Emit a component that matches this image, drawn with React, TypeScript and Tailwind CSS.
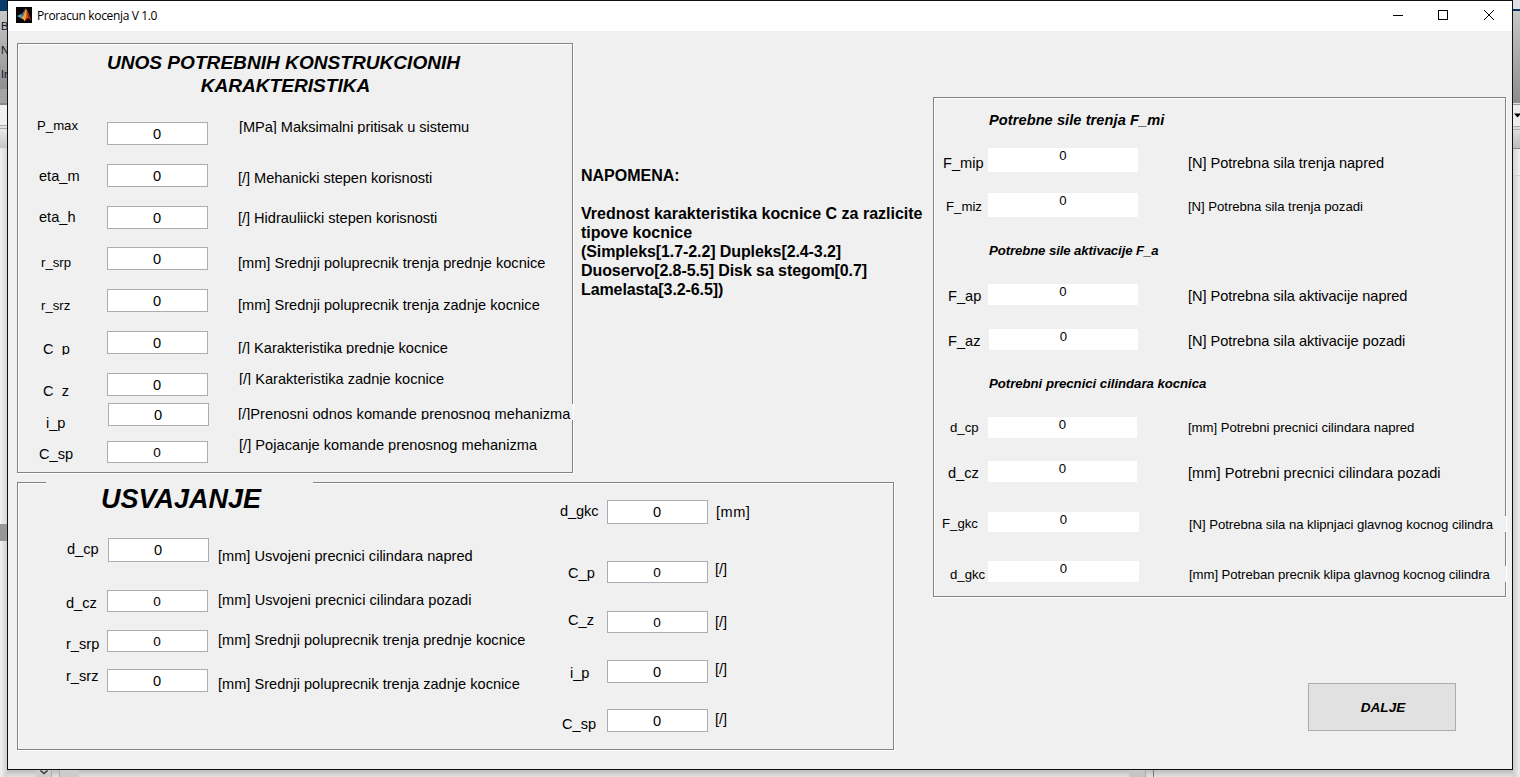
import React from "react";

type Size = "sm" | "md";

interface RowData {
  row: string;
  label: string;
  labelCls: string;
  labelSize?: Size;
  fieldCls: string;
  digitSize?: Size;
  text: string;
  textCls: string;
  textSize?: Size;
}

const sizes: Record<Size, string> = {
  sm: "text-[13.2px] leading-[17px]",
  md: "text-[14.6px] leading-[16px]",
};

const digitSizes: Record<Size, string> = {
  sm: "text-[13.6px] leading-[17px]",
  md: "text-[14.6px] leading-[16px]",
};

const etched =
  "border border-[#828282] shadow-[1px_1px_0_#fff,inset_1px_1px_0_#fff]";

const inputRows: RowData[] = [
  { row: "h-[46px]", label: "P_max", labelCls: "pl-[18px] -mt-px", labelSize: "sm", fieldCls: "mt-1 h-[23px]", text: "[MPa] Maksimalni pritisak u sistemu", textCls: "ml-px mt-px h-[15px] tracking-[-0.05px]" },
  { row: "h-[42px]", label: "eta_m", labelCls: "pl-5 mt-1", fieldCls: "h-[23px]", text: "[/] Mehanicki stepen korisnosti", textCls: "mt-1.5 tracking-[-0.04px]" },
  { row: "h-[41px]", label: "eta_h", labelCls: "pl-5 mt-[3px]", fieldCls: "h-[23px]", text: "[/] Hidrauliicki stepen korisnosti", textCls: "mt-1 tracking-[-0.03px]" },
  { row: "h-[42px]", label: "r_srp", labelCls: "pl-[22px] mt-[7px]", labelSize: "sm", fieldCls: "h-[23px]", text: "[mm] Srednji poluprecnik trenja prednje kocnice", textCls: "mt-2" },
  { row: "h-[42px]", label: "r_srz", labelCls: "pl-[22px] mt-2", labelSize: "sm", fieldCls: "h-[23px]", text: "[mm] Srednji poluprecnik trenja zadnje kocnice", textCls: "mt-2" },
  { row: "h-[40px]", label: "C_p", labelCls: "pl-6 mt-2.5 h-[14px]", fieldCls: "h-[23px]", text: "[/] Karakteristika prednje kocnice", textCls: "mt-[9px] h-[14px] tracking-[-0.03px]" },
  { row: "h-[32px]", label: "C_z", labelCls: "pl-6 mt-3 h-[14px]", fieldCls: "mt-0.5 h-[23px]", text: "[/] Karakteristika zadnje kocnice", textCls: "ml-px h-[14px]" },
  { row: "h-[34px]", label: "i_p", labelCls: "pl-[27px] mt-3", fieldCls: "ml-px -mr-px h-[23px]", text: "[/]Prenosni odnos komande prenosnog mehanizma", textCls: "mt-px pt-0.5 h-[16px] -mr-px tracking-[0.05px]" },
  { row: "h-[30px]", label: "C_sp", labelCls: "pl-5 mt-[9px]", fieldCls: "mt-1 h-[22px]", digitSize: "sm", text: "[/] Pojacanje komande prenosnog mehanizma", textCls: "ml-px tracking-[0.03px]" },
];

const adoptedRows: RowData[] = [
  { row: "h-[52px]", label: "d_cp", labelCls: "pl-12 mt-[3px]", fieldCls: "ml-px -mr-px h-[24px]", text: "[mm] Usvojeni precnici cilindara napred", textCls: "mt-2.5" },
  { row: "h-[40px]", label: "d_cz", labelCls: "pl-[47px] mt-[5px]", fieldCls: "h-[22px]", digitSize: "sm", text: "[mm] Usvojeni precnici cilindara pozadi", textCls: "mt-0.5 tracking-[0.03px]" },
  { row: "h-[38px]", label: "r_srp", labelCls: "pl-[47px] mt-1.5", fieldCls: "h-[22px]", digitSize: "sm", text: "[mm] Srednji poluprecnik trenja prednje kocnice", textCls: "mt-0.5" },
  { row: "h-[30px]", label: "r_srz", labelCls: "pl-[47px]", fieldCls: "mt-px h-[23px]", text: "[mm] Srednji poluprecnik trenja zadnje kocnice", textCls: "mt-2" },
];

const adoptedUnits: RowData[] = [
  { row: "h-[61px]", label: "d_gkc", labelCls: "pl-1 mt-[3px] tracking-[-0.1px]", fieldCls: "h-[24px]", text: "[mm]", textCls: "ml-px mt-1 tracking-[0.5px]" },
  { row: "h-[50px]", label: "C_p", labelCls: "pl-3 mt-1", fieldCls: "h-[22px]", digitSize: "sm", text: "[/]", textCls: "" },
  { row: "h-[49px]", label: "C_z", labelCls: "pl-3 mt-px", fieldCls: "h-[22px]", digitSize: "sm", text: "[/]", textCls: "mt-[3px]" },
  { row: "h-[49px]", label: "i_p", labelCls: "pl-3.5 mt-[5px]", fieldCls: "h-[23px]", text: "[/]", textCls: "mt-px" },
  { row: "h-[30px]", label: "C_sp", labelCls: "pl-1.5 mt-[7px]", fieldCls: "h-[23px]", text: "[/]", textCls: "mt-0.5" },
];

const frictionRows: RowData[] = [
  { row: "h-[45px]", label: "F_mip", labelCls: "pl-2 mt-[7px]", fieldCls: "w-[150px] h-[24px]", text: "[N] Potrebna sila trenja napred", textCls: "mt-[7px] tracking-[-0.06px]" },
  { row: "h-[49px]", label: "F_miz", labelCls: "pl-[11px] mt-[5px]", labelSize: "sm", fieldCls: "w-[150px] h-[24px]", text: "[N] Potrebna sila trenja pozadi", textCls: "mt-[5px] tracking-[-0.06px]", textSize: "sm" },
];

const activationRows: RowData[] = [
  { row: "h-[45px]", label: "F_ap", labelCls: "pl-[13px] mt-1", fieldCls: "w-[150px] h-[21px]", text: "[N] Potrebna sila aktivacije napred", textCls: "mt-1 tracking-[-0.06px]" },
  { row: "h-[46px]", label: "F_az", labelCls: "pl-[13px] mt-1", fieldCls: "ml-px w-[149px] h-[21px]", text: "[N] Potrebna sila aktivacije pozadi", textCls: "mt-1 tracking-[-0.05px]" },
];

const diameterRows: RowData[] = [
  { row: "h-[44px]", label: "d_cp", labelCls: "pl-[15px] mt-0.5", labelSize: "sm", fieldCls: "w-[149px] h-[21px]", text: "[mm] Potrebni precnici cilindara napred", textCls: "mt-0.5 tracking-[-0.06px]", textSize: "sm" },
  { row: "h-[51px]", label: "d_cz", labelCls: "pl-[13px] mt-1", fieldCls: "w-[149px] h-[21px]", text: "[mm] Potrebni precnici cilindara pozadi", textCls: "mt-1 tracking-[0.05px]" },
  { row: "h-[49px]", label: "F_gkc", labelCls: "pl-[7px] mt-[3px]", labelSize: "sm", fieldCls: "w-[151px] h-[20px]", text: "[N] Potrebna sila na klipnjaci glavnog kocnog cilindra", textCls: "pl-px mt-1 h-[16px] -mr-px tracking-[-0.07px]", textSize: "sm" },
  { row: "h-[30px]", label: "d_gkc", labelCls: "pl-[15px] mt-[5px]", labelSize: "sm", fieldCls: "w-[151px] h-[21px]", text: "[mm] Potreban precnik klipa glavnog kocnog cilindra", textCls: "pl-px mt-[5px] h-[16px] -mr-px tracking-[-0.08px]", textSize: "sm" },
];

function Row({ data, labelCol, fieldCol, output }: { data: RowData; labelCol: string; fieldCol: string; output?: boolean }) {
  const digit = output
    ? "bg-white items-start text-[13.2px] leading-[15px]"
    : `w-[101px] bg-white border border-[#abadb3] items-center pr-px ${digitSizes[data.digitSize ?? "md"]}`;
  return (
    <div className={`flex items-start indent-px ${data.row}`}>
      <div className={`shrink-0 overflow-hidden ${labelCol} ${data.labelCls} ${sizes[data.labelSize ?? "md"]}`}>{data.label}</div>
      <div className={`shrink-0 indent-0 ${fieldCol}`}>
        <div className={`flex justify-center ${digit} ${data.fieldCls}`}>0</div>
      </div>
      <div className={`relative flex-1 overflow-hidden bg-[#f0f0f0] ${data.textCls} ${sizes[data.textSize ?? "md"]}`}>{data.text}</div>
    </div>
  );
}

function MatlabIcon() {
  return (
    <svg width="16" height="16" viewBox="0 0 16 16">
      <rect width="16" height="16" fill="#0a0505" />
      <path d="M1 9 L5 7 L7.5 9.5 L5.5 11.5 L3.5 10.5 Z" fill="#4a9bb5" />
      <path d="M5 7 C7 6 8 3 10 1.5 L9 6.5 L7 9.5 Z" fill="#2f6f8f" />
      <path d="M10 1.5 C8.8 4 8 8 5.5 11.5 C7.2 11 8 13 8.6 14.2 C10 13 11 11 12 11 L15 13 C13.5 9 11.8 3.5 10 1.5 Z" fill="#d9541e" />
      <path d="M10 1.5 C10.8 5 10.5 9 8.6 14.2 C7.8 12.5 7 11.4 5.5 11.5 C8 8 9 5 10 1.5 Z" fill="#f5a13c" />
      <path d="M10.4 3 C12 6 13.2 9.5 15 13 L12.2 11 Z" fill="#8e1f14" />
    </svg>
  );
}

function TitleBar() {
  return (
    <div className="flex h-[30px] items-start bg-white pl-2 pt-[6px] text-black">
      <MatlabIcon />
      <span className="ml-[5px] mt-px whitespace-nowrap font-['Open_Sans','Noto_Sans',sans-serif] text-[12px] leading-[16px] tracking-[-0.35px]">
        Proracun kocenja V 1.0
      </span>
      <svg className="ml-auto mr-[17px] mt-[2px]" width="103" height="12" viewBox="0 0 103 12" fill="none" stroke="#000" shapeRendering="crispEdges">
        <path d="M1 6.5H11" />
        <rect x="46.5" y="1.5" width="9" height="9" />
        <path d="M92 1L102 11M102 1L92 11" shapeRendering="auto" />
      </svg>
    </div>
  );
}

function InputPanel() {
  return (
    <section className={`h-[430px] w-[556px] shrink-0 ${etched}`}>
      <h1 className="mt-[7px] h-[67px] pr-[23px] text-center text-[19.1px] font-bold italic leading-[23px]">
        UNOS POTREBNIH KONSTRUKCIONIH
        <br />
        <span className="pl-1">KARAKTERISTIKA</span>
      </h1>
      {inputRows.map((r) => (
        <Row key={r.label} data={r} labelCol="w-[89px]" fieldCol="w-[130px]" />
      ))}
    </section>
  );
}

function Note() {
  return (
    <div className="ml-2 mt-[123px] whitespace-nowrap text-[16px] font-bold leading-[19px]">
      <p className="mb-[19px]">NAPOMENA:</p>
      <p>Vrednost karakteristika kocnice C za razlicite</p>
      <p>tipove kocnice</p>
      <p className="tracking-[-0.09px]">(Simpleks[1.7-2.2] Dupleks[2.4-3.2]</p>
      <p className="tracking-[-0.08px]">Duoservo[2.8-5.5] Disk sa stegom[0.7]</p>
      <p className="tracking-[-0.1px]">Lamelasta[3.2-6.5])</p>
    </div>
  );
}

function AdoptedPanel() {
  return (
    <section className={`mt-[9px] flex h-[268px] w-[877px] ${etched}`}>
      <div className="w-[537px] shrink-0">
        <h2 className="relative -mt-px ml-7 h-[56px] w-[267px] text-center text-[27px] font-bold italic leading-[34px]">
          <span className="block bg-[#f0f0f0] pl-[3px]">USVAJANJE</span>
        </h2>
        {adoptedRows.map((r) => (
          <Row key={r.label} data={r} labelCol="w-[89px]" fieldCol="w-[110px]" />
        ))}
      </div>
      <div className="w-[230px] pt-[17px]">
        {adoptedUnits.map((r) => (
          <Row key={r.label} data={r} labelCol="w-[52px]" fieldCol="w-[107px]" />
        ))}
      </div>
    </section>
  );
}

function ResultPanel() {
  const group = (rows: RowData[]) =>
    rows.map((r) => <Row key={r.label} data={r} labelCol="w-[54px]" fieldCol="w-[199px]" output />);
  return (
    <section className={`h-[500px] w-[573px] ${etched}`}>
      <h3 className="mt-[14px] h-[36px] pl-[55px] text-[14.6px] font-bold italic leading-[16px] tracking-[0.07px]">Potrebne sile trenja F_mi</h3>
      {group(frictionRows)}
      <h3 className="h-[42px] pl-[55px] text-[13.2px] font-bold italic leading-[17px] tracking-[-0.1px]">Potrebne sile aktivacije F_a</h3>
      {group(activationRows)}
      <h3 className="h-[42px] pl-[55px] text-[13.2px] font-bold italic leading-[17px] tracking-[-0.03px]">Potrebni precnici cilindara kocnica</h3>
      {group(diameterRows)}
    </section>
  );
}

function LeftBackdrop() {
  return (
    <div className="flex w-[7px] shrink-0 flex-col overflow-hidden text-[11px] leading-[14px] text-[#101030]">
      <div className="h-[11px] bg-[#0a3a6c]" />
      <div className="flex h-[78px] flex-col gap-[10px] bg-linear-to-b from-[#c8c8c8] to-[#8f8f8f] pl-px pt-[8px]">
        <span>B</span>
        <span>N</span>
        <span>In</span>
      </div>
      <div className="h-[14px] bg-[#a3a3a3]" />
      <div className="h-[2px] bg-[#8a8a8a]" />
      <div className="h-[21px] border-b border-[#aaa] bg-[#f0f0f0]" />
      <div className="h-[3px] border-b border-[#aaa] bg-[#e4e4e4]" />
      <div className="h-[19px] bg-linear-to-b from-[#e8e8e8] to-[#c6c6c6]" />
      <div className="h-[376px] bg-linear-to-r from-[#f2f2f2] to-[#d8d8d8]" />
      <div className="h-[17px] bg-[#979797]" />
      <div className="flex-1 bg-linear-to-r from-[#f2f2f2] to-[#d0d0d0]" />
    </div>
  );
}

function RightBackdrop() {
  return (
    <div className="flex w-[7px] shrink-0 flex-col overflow-hidden">
      <div className="h-[9px] bg-[#dfe1e6]" />
      <div className="h-[2px] bg-[#0b3467]" />
      <div className="h-[92px] bg-linear-to-b from-[#c8c8c8] to-[#8c8c8c]" />
      <div className="h-[2px] border-b border-[#999] bg-[#e0e0e0]" />
      <div className="flex h-[22px] items-center border-b border-[#aaa] bg-[#ededed]">
        <svg width="7" height="5" viewBox="0 0 7 5">
          <path d="M1 0.5H8L4.5 4.5Z" fill="#000" />
        </svg>
      </div>
      <div className="h-[3px] border-b border-[#aaa] bg-[#dcdcdc]" />
      <div className="h-[19px] border-b border-[#7f8794] bg-linear-to-b from-[#dedede] to-[#bcbcbc]" />
      <div className="h-[27px] border-b border-[#d0d0d0] bg-linear-to-r from-[#d4d4d4] to-[#f0f0f0]" />
      <div className="flex-1 bg-linear-to-r from-[#cfcfcf] to-[#ededed]" />
    </div>
  );
}

function BottomBackdrop() {
  return (
    <div className="flex h-[7px] bg-linear-to-b from-[#bdbdbd] to-[#e2e2e2]">
      <div className="ml-[29px] flex w-[16px] justify-center border-r border-[#aaa] bg-[#cdcdcd]">
        <svg width="8" height="5" viewBox="0 0 8 5">
          <path d="M0.5 0.5L4 3.5L7.5 0.5" fill="none" stroke="#444" strokeWidth="1.6" />
        </svg>
      </div>
      <div className="ml-[7px] w-[20px] border-l border-[#aaa] bg-[#cdcdcd]" />
      <div className="ml-auto mr-[359px] flex w-[25px] border-r border-[#777]">
        <div className="w-[17px] border-r border-[#aaa] bg-[#c6c6c6]" />
      </div>
    </div>
  );
}

export default function App() {
  return (
    <div className="flex h-[777px] w-[1520px] overflow-hidden bg-[#e4e4e4] font-['Liberation_Sans',Arial,sans-serif] text-black">
      <LeftBackdrop />
      <div className="flex w-[1506px] shrink-0 flex-col">
        <main className="flex h-[770px] flex-col whitespace-nowrap border border-[#101010] bg-[#f0f0f0]">
          <TitleBar />
          <div className="flex flex-1 pl-[9px]">
            <div className="w-[916px] shrink-0 pt-3">
              <div className="flex">
                <InputPanel />
                <Note />
              </div>
              <AdoptedPanel />
            </div>
            <div className="flex w-[573px] flex-col pt-[66px]">
              <ResultPanel />
              <button className="mr-[50px] mt-[86px] h-[48px] w-[148px] self-end border border-[#adadad] bg-[#e1e1e1] pl-[2px] pt-[2px] text-[13.6px] font-bold italic">
                DALJE
              </button>
            </div>
          </div>
        </main>
        <BottomBackdrop />
      </div>
      <RightBackdrop />
    </div>
  );
}
